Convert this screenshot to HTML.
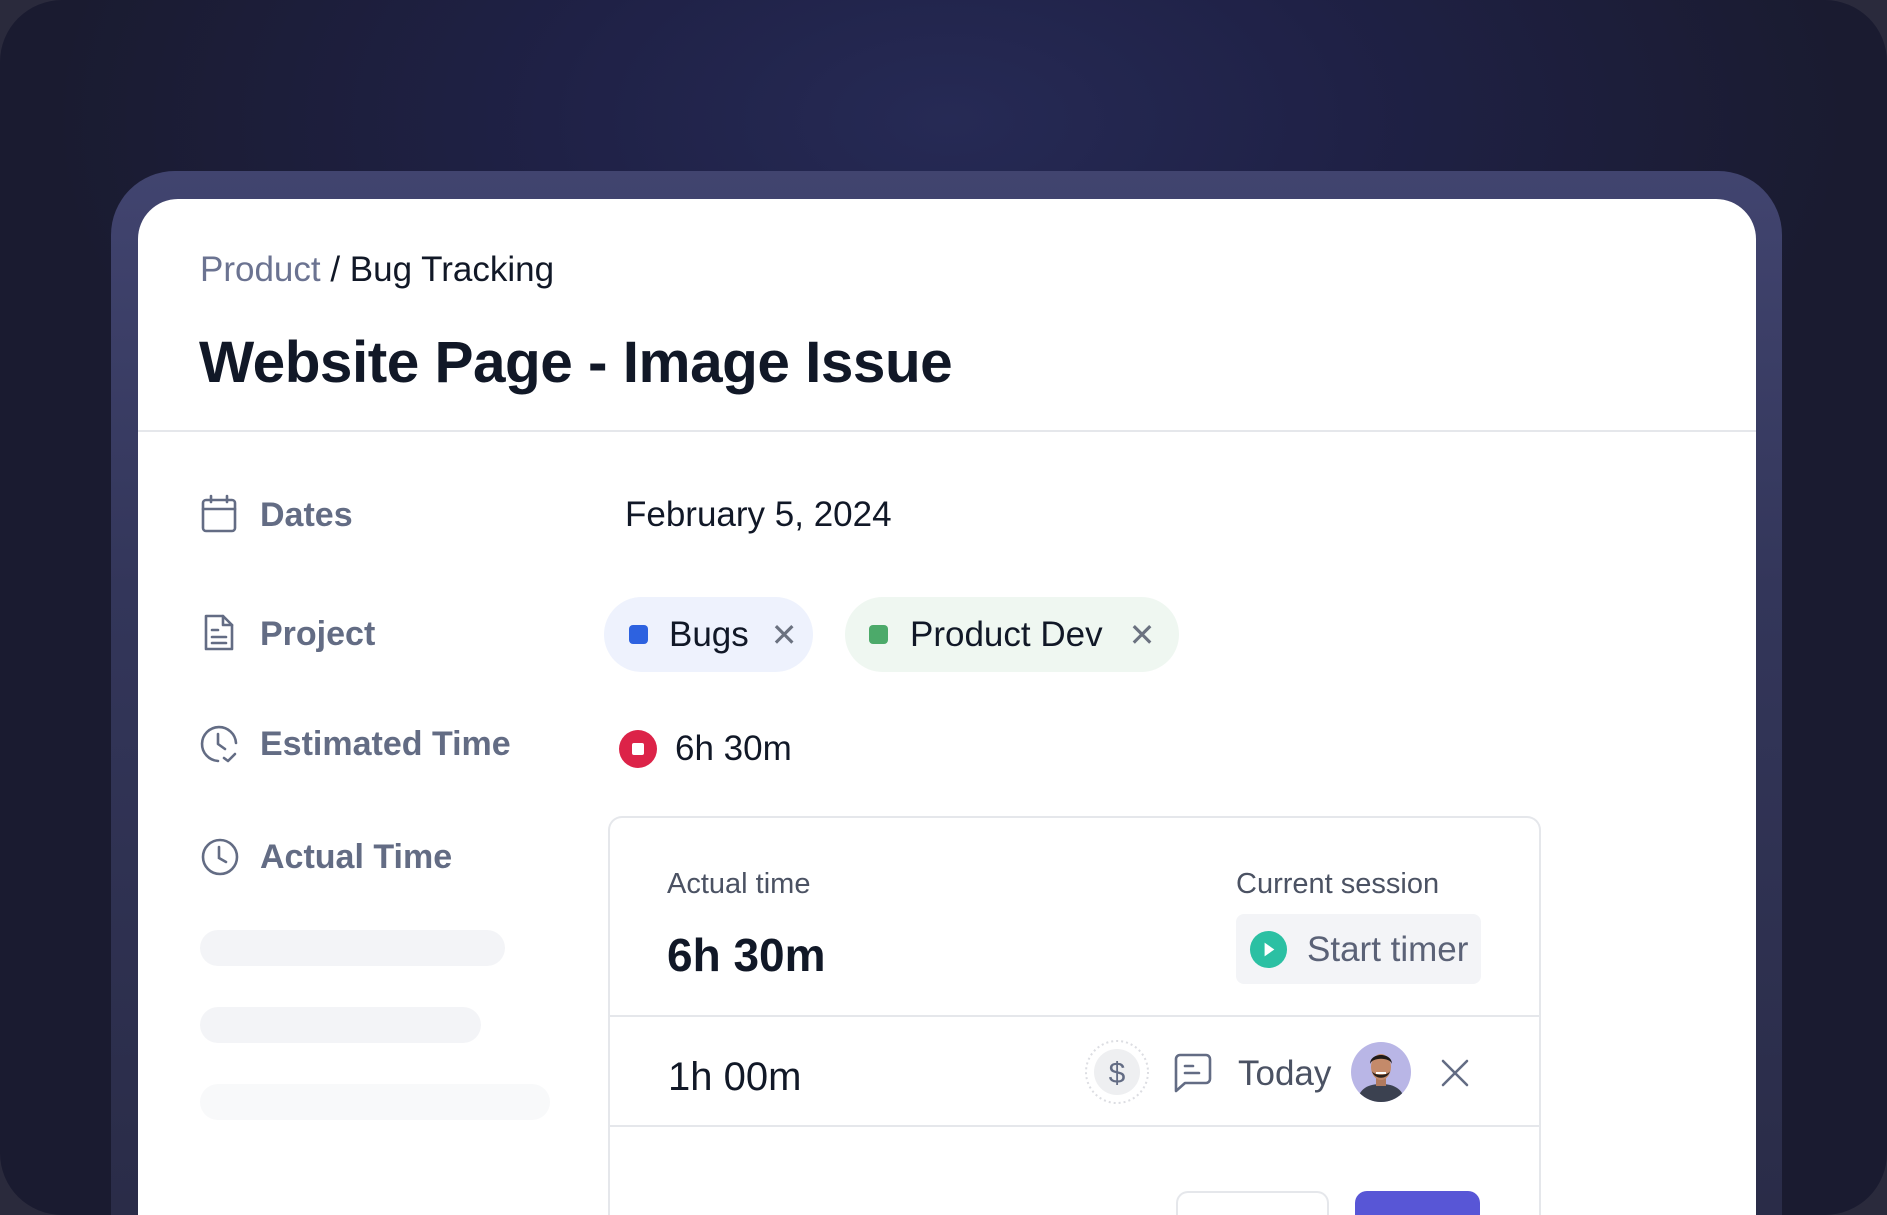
<!DOCTYPE html>
<html><head><meta charset="utf-8"><style>
*{margin:0;padding:0;box-sizing:border-box}
html,body{width:1887px;height:1215px;overflow:hidden;background:#2a2a3c}
body{font-family:"Liberation Sans",sans-serif;position:relative}
.frame{position:absolute;left:0;top:0;width:1887px;height:1215px;border-radius:62px;background:radial-gradient(ellipse 900px 500px at 950px 120px,#262a55 0%,#1f2146 45%,#1a1b30 100%);overflow:hidden}
.band{position:absolute;left:111px;top:171px;width:1671px;height:1044px;border-radius:64px 64px 0 0;background:linear-gradient(180deg,#41446f 0%,#33365a 40%,#2a2c48 100%)}
.card{position:absolute;left:138px;top:199px;width:1618px;height:1016px;border-radius:40px 40px 0 0;background:#fff}
.abs{position:absolute;white-space:nowrap}
.lbl{color:#636c84;font-size:34px;font-weight:bold;line-height:40px}
.val{color:#111827;font-size:35px;line-height:40px}
.chip{position:absolute;height:75px;border-radius:38px;display:flex;align-items:center;font-size:35px;color:#111827}
.sk{position:absolute;height:36px;border-radius:18px;background:#f3f4f7}
</style></head><body>
<div class="frame">
<div class="band"></div>
<div class="card"></div>
<div class="abs" style="left:200px;top:250px;font-size:35px;line-height:40px;color:#6b7391">Product <span style="color:#111827">/ Bug Tracking</span></div>
<div class="abs" style="left:199px;top:330px;font-size:58.5px;line-height:66px;font-weight:bold;color:#111827;letter-spacing:-0.5px">Website Page - Image Issue</div>
<div class="abs" style="left:138px;top:430px;width:1618px;height:2px;background:#e5e7eb"></div>

<svg class="abs" style="left:200px;top:494px" width="38" height="40" viewBox="0 0 38 40" fill="none" stroke="#636c84" stroke-width="2.6" stroke-linecap="round"><rect x="3" y="6" width="32" height="31" rx="3"/><path d="M3 15H35M11 2V8M27 2V8"/></svg>
<div class="abs lbl" style="left:260px;top:495px">Dates</div>
<div class="abs val" style="left:625px;top:495px">February 5, 2024</div>

<svg class="abs" style="left:202px;top:613px" width="34" height="40" viewBox="0 0 34 40" fill="none" stroke="#636c84" stroke-width="2.6" stroke-linejoin="round" stroke-linecap="round"><path d="M4 3H21L30 12V36H4Z"/><path d="M21 3V12H30M10 17H16M10 24H24M10 30H24"/></svg>
<div class="abs lbl" style="left:260px;top:614px">Project</div>
<div class="chip" style="left:604px;top:597px;width:209px;background:#eef2fd"><span style="width:19px;height:19px;border-radius:4px;background:#2d62e0;margin-left:25px;margin-right:21px"></span>Bugs<span style="margin-left:22px;color:#6b7280;font-size:32px">✕</span></div>
<div class="chip" style="left:845px;top:597px;width:334px;background:#eff7f1"><span style="width:19px;height:19px;border-radius:4px;background:#4caa6a;margin-left:24px;margin-right:22px"></span>Product Dev<span style="margin-left:26px;color:#6b7280;font-size:32px">✕</span></div>

<svg class="abs" style="left:199px;top:723px" width="42" height="42" viewBox="0 0 42 42" fill="none" stroke="#636c84" stroke-width="2.6" stroke-linecap="round" stroke-linejoin="round"><path d="M19 38A17 17 0 1 1 37 20"/><path d="M19 11V21L26 26M25 35L29 38L36 31"/></svg>
<div class="abs lbl" style="left:260px;top:724px">Estimated Time</div>
<svg class="abs" style="left:618px;top:729px" width="40" height="40" viewBox="0 0 40 40"><circle cx="20" cy="20" r="19" fill="#dc2348"/><rect x="14" y="14" width="12" height="12" rx="2" fill="#fff"/></svg>
<div class="abs val" style="left:675px;top:729px">6h 30m</div>

<svg class="abs" style="left:199px;top:836px" width="42" height="42" viewBox="0 0 42 42" fill="none" stroke="#636c84" stroke-width="2.6" stroke-linecap="round"><circle cx="21" cy="21" r="17"/><path d="M20 11V22L27 26"/></svg>
<div class="abs lbl" style="left:260px;top:837px">Actual Time</div>

<div class="sk" style="left:200px;top:930px;width:305px"></div>
<div class="sk" style="left:200px;top:1007px;width:281px"></div>
<div class="sk" style="left:200px;top:1084px;width:350px;background:#f8f9fa"></div>

<div class="abs" style="left:608px;top:816px;width:933px;height:399px;border:2px solid #e5e7eb;border-bottom:none;border-radius:14px 14px 0 0;background:#fff"></div>
<div class="abs" style="left:667px;top:866px;font-size:29px;line-height:36px;color:#4b5263">Actual time</div>
<div class="abs" style="left:667px;top:928px;font-size:46px;line-height:54px;font-weight:bold;color:#111827">6h 30m</div>
<div class="abs" style="left:1236px;top:866px;font-size:29px;line-height:36px;color:#4b5263">Current session</div>
<div class="abs" style="left:1236px;top:914px;width:245px;height:70px;border-radius:8px;background:#f3f4f7"></div>
<svg class="abs" style="left:1249px;top:930px" width="39" height="39" viewBox="0 0 40 40"><circle cx="20" cy="20" r="19" fill="#2bc0a3"/><path d="M16 13L26 20L16 27Z" fill="#fff"/></svg>
<div class="abs" style="left:1307px;top:930px;font-size:35px;line-height:40px;color:#5b6277">Start timer</div>
<div class="abs" style="left:609px;top:1015px;width:931px;height:2px;background:#e5e7eb"></div>

<div class="abs" style="left:668px;top:1054px;font-size:40px;line-height:46px;color:#111827">1h 00m</div>
<svg class="abs" style="left:1084px;top:1039px" width="66" height="66" viewBox="0 0 66 66"><circle cx="33" cy="33" r="31" fill="none" stroke="#dcdde2" stroke-width="2" stroke-dasharray="2 3"/><circle cx="33" cy="33" r="23" fill="#eeeff1"/><text x="33" y="44" text-anchor="middle" font-family="Liberation Sans" font-size="30" fill="#636c84">$</text></svg>
<svg class="abs" style="left:1172px;top:1052px" width="42" height="42" viewBox="0 0 42 42" fill="none" stroke="#636c84" stroke-width="2.6" stroke-linecap="round" stroke-linejoin="round"><path d="M4 7A4 4 0 0 1 8 3H34A4 4 0 0 1 38 7V27A4 4 0 0 1 34 31H13L4 39Z"/><path d="M13 14H21M13 21H27"/></svg>
<div class="abs" style="left:1238px;top:1053px;font-size:35px;line-height:42px;color:#4b5263">Today</div>
<svg class="abs" style="left:1351px;top:1042px" width="60" height="60" viewBox="0 0 60 60"><defs><clipPath id="c"><circle cx="30" cy="30" r="30"/></clipPath></defs><g clip-path="url(#c)"><rect width="60" height="60" fill="#b9b6e6"/><path d="M6 60C8 46 18 42 30 42S52 46 54 60Z" fill="#3b4150"/><rect x="25" y="34" width="10" height="10" fill="#b07a5e"/><ellipse cx="30" cy="25" rx="10" ry="13" fill="#c48a6a"/><path d="M19 22C19 10 41 10 41 22C39 15 21 15 19 22Z" fill="#1f1a17"/><path d="M21 29C23 38 37 38 39 29C37 34 23 34 21 29Z" fill="#2a211c"/><path d="M25 31H35" stroke="#fff" stroke-width="2"/></g></svg>
<svg class="abs" style="left:1440px;top:1058px" width="30" height="30" viewBox="0 0 30 30" stroke="#636c84" stroke-width="2.6" stroke-linecap="round"><path d="M3 3L27 27M27 3L3 27"/></svg>
<div class="abs" style="left:609px;top:1125px;width:931px;height:2px;background:#e5e7eb"></div>

<div class="abs" style="left:1176px;top:1191px;width:153px;height:24px;border:2px solid #e5e7eb;border-bottom:none;border-radius:12px 12px 0 0;background:#fff"></div>
<div class="abs" style="left:1355px;top:1191px;width:125px;height:24px;border-radius:12px 12px 0 0;background:#5856d6"></div>
</div>
</body></html>
